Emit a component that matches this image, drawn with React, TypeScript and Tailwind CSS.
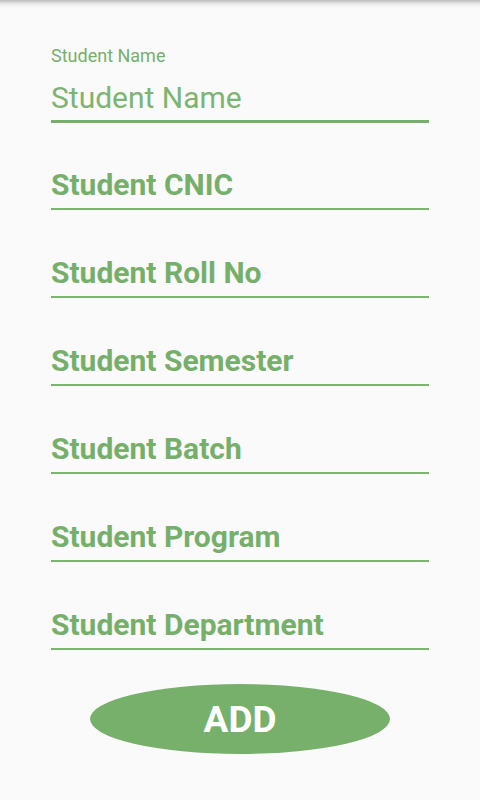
const fields = [
  'Student CNIC',
  'Student Roll No',
  'Student Semester',
  'Student Batch',
  'Student Program',
  'Student Department',
]

export default function App() {
  return (
    <div className="min-h-[800px] w-full bg-[#fafafa] font-['Roboto',sans-serif] text-[#76af6a]">
      {/* top shadow */}
      <div className="h-[8px] bg-gradient-to-b from-[#bcbcbc] via-[#ececec] to-[#fafafa]" />

      <div className="flex flex-col px-[51px]">
        {/* focused field */}
        <div className="mt-[39px] flex flex-col border-b-[3px] border-[#76af6a]">
          <span className="text-[18px] leading-[18px]">Student Name</span>
          <span className="mt-[18px] pb-[7px] text-[30px] leading-[30px] text-[#7db472]">Student Name</span>
        </div>

        {fields.map((f, i) => (
          <div
            key={f}
            className={`${i === 0 ? 'mt-[47px]' : 'mt-[48px]'} border-b-2 border-[#7db472] pb-[8px] text-[30px] font-bold leading-[30px]`}
          >
            {f}
          </div>
        ))}

        <button className="mx-auto mt-[34px] flex h-[70px] w-[300px] items-center justify-center rounded-[50%] bg-[#77b06a] text-[37px] font-bold leading-none text-white">
          ADD
        </button>
      </div>
    </div>
  )
}
